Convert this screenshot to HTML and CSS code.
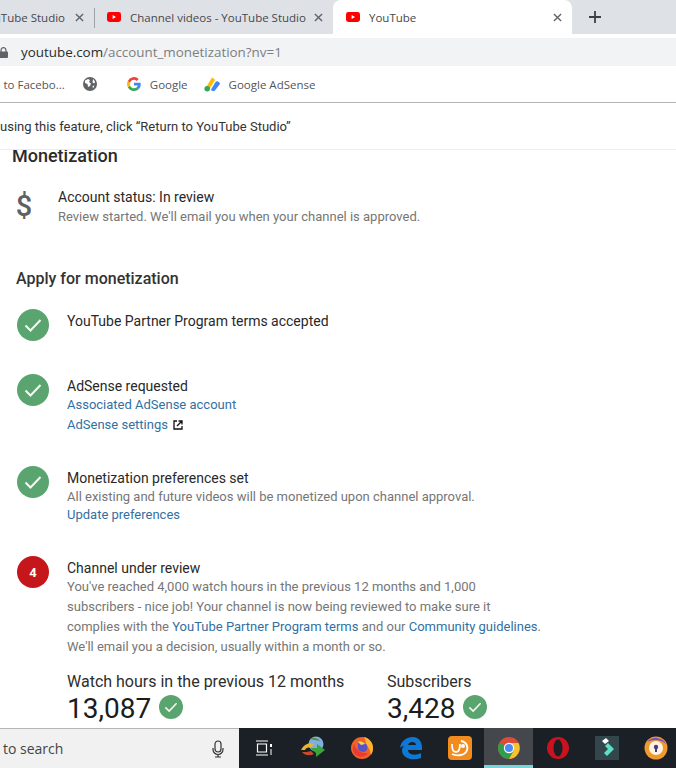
FILE: index.html
```html
<!DOCTYPE html>
<html lang="en">
<head>
<meta charset="utf-8">
<title>YouTube</title>
<link rel="stylesheet" href="styles.css">
</head>
<body>
<svg class="defs" width="0" height="0" aria-hidden="true">
  <symbol id="yt" viewBox="0 0 14 10"><rect width="14" height="10" rx="2.400" fill="#f00"/><path d="M5.600 3v4l3.400-2z" fill="#fff"/></symbol>
  <symbol id="x" viewBox="0 0 10 10"><path d="M1 1l8 8M9 1l-8 8" stroke="currentColor" stroke-width="1.500" fill="none"/></symbol>
  <symbol id="ok" viewBox="0 0 32 32"><circle cx="16" cy="16" r="16" fill="#5aa56f"/><path d="M8.500 16.500l5 5 10-10.500" stroke="#f4faf5" stroke-width="2" fill="none"/></symbol>
</svg>

<header class="tabbar">
  <div class="tab tab-cut"><span class="tab-title">YouTube Studio</span><svg class="close"><use href="#x"/></svg></div>
  <div class="sep"></div>
  <div class="tab tab-mid"><svg class="fav"><use href="#yt"/></svg><span class="tab-title">Channel videos - YouTube Studio</span><svg class="close"><use href="#x"/></svg></div>
  <div class="tab tab-active"><svg class="fav"><use href="#yt"/></svg><span class="tab-title">YouTube</span><svg class="close"><use href="#x"/></svg></div>
  <svg class="plus" viewBox="0 0 12 12"><path d="M6 0v12M0 6h12" stroke="#3c4043" stroke-width="1.800"/></svg>
</header>
<div class="gap"></div>
<div class="address">
  <svg class="lock" viewBox="0 0 9 11"><path d="M2 5V3.200a2.500 2.500 0 0 1 5 0V5" fill="none" stroke="#5f6368" stroke-width="1.200"/><rect y="4.500" width="9" height="6.500" rx="1" fill="#5f6368"/></svg>
  <span class="url">youtube.com<span class="url-path">/account_monetization?nv=1</span></span>
</div>
<nav class="bookmarks">
  <span class="bm bm-cut">e to Facebo...</span>
  <svg class="globe" viewBox="0 0 14 14"><circle cx="7" cy="7" r="7" fill="#5f6368"/><path d="M2 3.500l3-1.500 2 1-1 2 2 1.500-1 2.500-2 1-.5-3L2 6zM10 2l2 2.500-.5 2-2-1zM9.500 9l2-.5-1.500 3z" fill="#fff"/></svg>
  <svg class="g-logo" viewBox="0 0 14 14"><path d="M13.700 7.200c0-.5 0-1-.1-1.400H7v2.700h3.800c-.2.900-.7 1.600-1.400 2.100l2.200 1.700c1.300-1.200 2.100-3 2.100-5.100z" fill="#4285f4"/><path d="M7 14c1.900 0 3.400-.6 4.600-1.700L9.400 10.600c-.6.400-1.400.7-2.400.7-1.800 0-3.400-1.200-3.900-2.900L.8 10.200C2 12.500 4.300 14 7 14z" fill="#34a853"/><path d="M3.100 8.400a4.200 4.200 0 0 1 0-2.700L.8 3.900a7 7 0 0 0 0 6.300z" fill="#fbbc05"/><path d="M7 2.800c1 0 2 .4 2.700 1.100l2-2A7 7 0 0 0 .8 3.900l2.300 1.800C3.600 4 5.200 2.800 7 2.800z" fill="#ea4335"/></svg>
  <span class="bm bm-google">Google</span>
  <svg class="ads-logo" viewBox="0 0 16 14"><path d="M7.500 .5L2 9.500l3 2L10.500 2.500z" fill="#fbbc05"/><circle cx="3" cy="11" r="2.600" fill="#34a853"/><path d="M11 4.500l-4.500 7.500c1.500 1.800 3.500 1.500 4 .5L15 6.500c.5-1.500-3-3.500-4-2z" fill="#4285f4"/></svg>
  <span class="bm">Google AdSense</span>
</nav>
<div class="notice"><span class="notice-text">using this feature, click “Return to YouTube Studio”</span></div>

<main class="page">
  <h1 class="title">Monetization</h1>
  <section class="status">
    <svg class="dollar" viewBox="0 0 14 28"><text x="7" y="25" text-anchor="middle" font-family="Roboto" font-weight="500" font-size="29" fill="#606060">$</text></svg>
    <div>
      <p class="line dark">Account status: In review</p>
      <p class="line gray">Review started. We'll email you when your channel is approved.</p>
    </div>
  </section>
  <h2 class="subtitle">Apply for monetization</h2>

  <section class="step step-one">
    <svg class="badge"><use href="#ok"/></svg>
    <div class="step-body"><p class="line dark">YouTube Partner Program terms accepted</p></div>
  </section>

  <section class="step step-two">
    <svg class="badge"><use href="#ok"/></svg>
    <div class="step-body">
      <p class="line dark">AdSense requested</p>
      <p class="line tight"><a class="link">Associated AdSense account</a></p>
      <p class="line"><a class="link">AdSense settings</a>
        <svg class="ext" viewBox="0 0 10 10"><path d="M4 1H1v8h8V6M5.500 1H9v3.500M9 1L4 6" fill="none" stroke="#111" stroke-width="1.300"/></svg></p>
    </div>
  </section>

  <section class="step step-three">
    <svg class="badge"><use href="#ok"/></svg>
    <div class="step-body">
      <p class="line dark">Monetization preferences set</p>
      <p class="line gray tight">All existing and future videos will be monetized upon channel approval.</p>
      <p class="line tighter"><a class="link">Update preferences</a></p>
    </div>
  </section>

  <section class="step step-four">
    <div class="badge badge-red">4</div>
    <div class="step-body">
      <p class="line dark">Channel under review</p>
      <p class="line gray tight">You've reached 4,000 watch hours in the previous 12 months and 1,000</p>
      <p class="line gray">subscribers - nice job! Your channel is now being reviewed to make sure it</p>
      <p class="line gray">complies with the <a class="link">YouTube Partner Program terms</a> and our <a class="link">Community guidelines</a>.</p>
      <p class="line gray">We'll email you a decision, usually within a month or so.</p>
      <div class="stats">
        <div class="stat stat-hours">
          <p class="stat-label">Watch hours in the previous 12 months</p>
          <p class="stat-value">13,087<svg class="mini"><use href="#ok"/></svg></p>
          <p class="stat-note">4,000 required to join</p>
        </div>
        <div class="stat">
          <p class="stat-label">Subscribers</p>
          <p class="stat-value">3,428<svg class="mini"><use href="#ok"/></svg></p>
          <p class="stat-note">1,000 needed</p>
        </div>
      </div>
    </div>
  </section>
</main>

<footer class="taskbar">
  <div class="search">
    <span class="search-text">to search</span>
    <svg class="mic" viewBox="0 0 12 18"><rect x="3" y="1" width="6" height="11" rx="3" fill="none" stroke="#333" stroke-width="1.200"/><path d="M1 8v1.500a5 5 0 0 0 10 0V8M6 14.500V17M3 17h6" fill="none" stroke="#333" stroke-width="1.200"/></svg>
  </div>
  <div class="tray">
    <div class="slot"><svg class="ti-view" viewBox="0 0 16 16"><path d="M0 1h12M0 15h12M1.500 4h9v8h-9z" fill="none" stroke="#fff" stroke-width="1.200"/><path d="M14 4h2v3h-2z" fill="#fff"/><path d="M15 9v6" stroke="#fff"/></svg></div>
    <div class="slot"><svg class="ti" viewBox="0 0 24 24"><circle cx="15" cy="8" r="7.500" fill="#7fb0dc"/><path d="M9 3c3-2 8-1 10 2-3-1-7-1-10-2z" fill="#4f8d3c"/><path d="M0 14c3-6 8-8 13-6l-3 4c-3-1-5 0-6 2z" fill="#e9b52d"/><path d="M1 16c3 4 8 4 12 2l-3-3c-3 1-5 1-9 1z" fill="#c94a2a"/><path d="M9 12h7V8l8 6-9 7v-4l-6-5z" fill="#3aa53a"/></svg></div>
    <div class="slot"><svg class="ti" viewBox="0 0 24 24"><circle cx="12" cy="12" r="11" fill="#f0622a"/><path d="M14 1c5 1 9 6 9 11 0 3-1 5-2 7-1-6-3-9-6-10 1-2 1-5-1-8z" fill="#fcb52e"/><path d="M8 7c3-2 7-1 9 2 1 3 0 6-3 7-3 0-5-1-6-3z" fill="#5a52c8"/><path d="M4 8c2 7 8 10 14 9-3 5-11 5-14 0-2-3-1-6 0-9z" fill="#ed3833"/><path d="M8 6c3-1 6 0 7 2l-4 1z" fill="#f7d34a"/></svg></div>
    <div class="slot"><svg class="ti" viewBox="0 0 24 24"><path d="M1 12C2 5 7 1 14 1c6 0 9 5 9 11v2H9c0 5 8 6 13 3v5c-8 3-19 1-19-8 0-2 1-3 2-4-2 0-3 1-4 2zM9 9h8c0-4-7-4-8 0z" fill="#0f78d4"/></svg></div>
    <div class="slot"><svg class="ti" viewBox="0 0 24 24"><rect width="24" height="24" rx="4" fill="#f28c1e"/><path d="M4 8c0 6 1 8 4 8 3 0 4-3 4-8" fill="none" stroke="#fff" stroke-width="1.800"/><path d="M13 5c6 1 8 7 5 11-3 4-10 4-14 2" fill="none" stroke="#fff" stroke-width="1.800"/><circle cx="15" cy="10" r="2" fill="#fff"/></svg></div>
    <div class="slot slot-active"><svg class="ti" viewBox="0 0 24 24"><circle cx="12" cy="12" r="11" fill="#dd4b39"/><path d="M12 12L2.500 6.500A11 11 0 0 0 12 23l5.500-9.500z" fill="#2f9e4f"/><path d="M12 7h9.500A11 11 0 0 1 12 23l5-9z" fill="#f4c430"/><circle cx="12" cy="12" r="5.200" fill="#fff"/><circle cx="12" cy="12" r="4" fill="#4c8bf5"/></svg></div>
    <div class="slot"><svg class="ti" viewBox="0 0 24 24"><ellipse cx="12" cy="12" rx="11" ry="11" fill="#c9131e"/><ellipse cx="12" cy="12" rx="4.500" ry="8.500" fill="#1a2026"/></svg></div>
    <div class="slot"><svg class="ti" viewBox="0 0 24 24"><rect width="24" height="24" fill="#33464c"/><path d="M7 5l4-3 3 3-4 3z" fill="#fff"/><path d="M13 7l6 6-7 7-3-3 4-4-3-3z" fill="#5ce0c6"/></svg></div>
    <div class="slot"><svg class="ti" viewBox="0 0 24 24"><circle cx="12" cy="12" r="11.500" fill="#f09a2e"/><path d="M3 6a11.500 11.500 0 0 1 19 2C17 3 9 3 3 6z" fill="#7b4fc9"/><circle cx="12" cy="12" r="7" fill="#fdf3e3"/><circle cx="12" cy="11" r="2.200" fill="#4b3a78"/><path d="M11 12h2v4h-2z" fill="#4b3a78"/></svg></div>
  </div>
</footer>
</body>
</html>
```

FILE: styles.css
```css
* { box-sizing: border-box; }
html, body { margin: 0; height: 100%; }
body {
  width: 676px;
  height: 768px;
  overflow: hidden;
  display: flex;
  flex-direction: column;
  background: #fff;
  font-family: Roboto, sans-serif;
}
p, h1, h2 { margin: 0; font-weight: 400; }
.defs { position: absolute; }

/* browser chrome */
.tabbar {
  flex: none;
  height: 34px;
  display: flex;
  align-items: stretch;
  background: #dee1e6;
  font-family: "Open Sans", sans-serif;
  font-size: 11.500px;
  color: #45484c;
}
.tab { display: flex; align-items: center; overflow: hidden; white-space: nowrap; }
.tab-cut { width: 94px; justify-content: flex-end; padding-right: 10px; }
.tab-cut .tab-title { margin-right: 10px; }
.sep { width: 1px; height: 20px; margin-top: 8px; background: #9ea1a5; }
.tab-mid { width: 238px; padding-left: 12px; }
.tab-mid .tab-title { width: 184px; }
.tab-active {
  width: 239px;
  height: 38px;
  padding-left: 13px;
  padding-bottom: 4px;
  background: #fff;
  border-radius: 8px 8px 0 0;
}
.tab-active .tab-title { width: 184px; }
.fav { width: 14px; height: 10px; margin-right: 9px; flex: none; }
.close { width: 9px; height: 9px; color: #5f6368; flex: none; }
.plus { width: 12px; height: 12px; margin: 11px 0 0 17px; }
.gap { flex: none; height: 4px; background: #fff; }

.address {
  flex: none;
  height: 28px;
  display: flex;
  align-items: center;
  background: #f1f3f4;
  font-family: "Open Sans", sans-serif;
  font-size: 13.400px;
  color: #2a2c2e;
}
.lock { width: 9px; height: 11px; margin-left: -1px; margin-right: 13px; }
.url-path { color: #7c7f83; }

.bookmarks {
  flex: none;
  height: 37px;
  display: flex;
  align-items: center;
  background: #fff;
  border-bottom: 1px solid #b4b4b4;
  font-family: "Open Sans", sans-serif;
  font-size: 11.500px;
  color: #53565a;
}
.bm-cut { margin-left: -6px; }
.globe { width: 14px; height: 14px; margin-left: 18px; }
.g-logo { width: 14px; height: 14px; margin-left: 30px; }
.bm-google { margin-left: 9px; }
.ads-logo { width: 17px; height: 15px; margin-left: 16px; margin-right: 8px; }

.notice {
  flex: none;
  height: 47px;
  display: flex;
  align-items: center;
  border-bottom: 1px solid #ececec;
  font-size: 13px;
  color: #333;
}

/* page */
.page { flex: 1 1 0; min-height: 0; overflow: hidden; }
.title {
  font-size: 18px;
  font-weight: 500;
  line-height: 12px;
  padding-left: 12px;
  color: #2b2b2b;
}
.status {
  display: flex;
  margin-top: 25px;
  padding-left: 17px;
}
.dollar { width: 14px; height: 28px; margin: 4px 27px 0 0; flex: none; }
.line { font-size: 13px; line-height: 20px; white-space: nowrap; }
.dark { font-size: 14px; color: #282828; }
.gray { color: #767676; }
.tight { margin-top: -1px; }
.tighter { margin-top: -2px; }
.link { color: #34709f; }
.ext { width: 10px; height: 10px; margin-left: 2px; vertical-align: -1px; }
.subtitle {
  margin: 42px 0 0 16px;
  font-size: 16px;
  font-weight: 500;
  line-height: 20px;
  color: #333;
}
.step { display: flex; padding-left: 17px; }
.step-one { margin-top: 20px; height: 65px; }
.step-two { height: 92px; }
.step-three { height: 90px; }
.badge { width: 32px; height: 32px; flex: none; margin-right: 18px; }
.badge-red {
  display: flex;
  align-items: center;
  justify-content: center;
  border-radius: 50%;
  background: #c5171b;
  color: #fff;
  font-size: 13px;
  font-weight: 700;
}
.step-body { padding-top: 2px; }
.stats { display: flex; margin-top: 15px; }
.stat-hours { width: 320px; }
.stat-label { font-size: 16px; line-height: 20px; color: #2d2d2d; }
.stat-value {
  display: flex;
  align-items: center;
  font-size: 28px;
  line-height: 34px;
  color: #1c1c1c;
}
.mini { width: 24px; height: 24px; margin: -4px 0 0 8px; }
.stat-note { font-size: 13px; line-height: 18px; color: #666; }

/* taskbar */
.taskbar {
  flex: none;
  height: 40px;
  display: flex;
  background: #1a2026;
}
.search {
  flex: none;
  width: 239px;
  display: flex;
  align-items: center;
  justify-content: space-between;
  padding: 0 15px 0 3px;
  background: #f1f1f1;
  border-top: 1px solid #b5b5b5;
  font-family: "Open Sans", sans-serif;
  font-size: 14px;
  color: #444;
}
.mic { width: 12px; height: 18px; }
.tray { display: flex; flex: none; }
.slot {
  flex: none;
  width: 49px;
  height: 40px;
  display: flex;
  align-items: center;
  justify-content: center;
}
.slot-active { background: #44484c; border-bottom: 3px solid #76d6dc; padding-top: 3px; }
.ti { width: 24px; height: 24px; }
.ti-view { width: 16px; height: 16px; }
```
